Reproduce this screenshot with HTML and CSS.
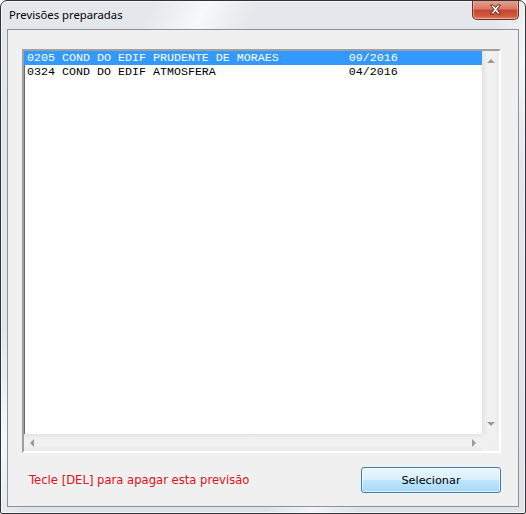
FILE: index.html
```html
<!DOCTYPE html>
<html lang="pt">
<head>
<meta charset="utf-8">
<title>Previsões preparadas</title>
<link rel="stylesheet" href="styles.css">
</head>
<body>
<div class="window">
  <div class="titlebar">
    <span class="title">Previsões preparadas</span>
    <button class="close" aria-label="Fechar">
      <svg width="13" height="11" viewBox="0 0 13 11">
        <path d="M1.5 1 L4.5 1 L6.5 3.6 L8.5 1 L11.5 1 L8 5.5 L11.5 10 L8.5 10 L6.5 7.4 L4.5 10 L1.5 10 L5 5.5 Z" fill="#fff" stroke="#5a2a22" stroke-width="1" stroke-linejoin="round"/>
      </svg>
    </button>
  </div>
  <div class="client">
    <div class="listbox">
      <div class="rows">
        <div class="row selected">0205 COND DO EDIF PRUDENTE DE MORAES          09/2016</div>
        <div class="row">0324 COND DO EDIF ATMOSFERA                   04/2016</div>
      </div>
      <div class="vscroll">
        <span class="arrow up"></span>
        <span class="arrow down"></span>
      </div>
      <div class="hscroll">
        <span class="arrow left"></span>
        <span class="arrow right"></span>
      </div>
      <div class="corner"></div>
    </div>
    <div class="footer">
      <span class="hint">Tecle [DEL] para apagar esta previsão</span>
      <button class="btn">Selecionar</button>
    </div>
  </div>
</div>
</body>
</html>
```

FILE: styles.css
```css
html, body {
  margin: 0;
  padding: 0;
  background: #ffffff;
}

.window {
  box-sizing: border-box;
  width: 526px;
  height: 514px;
  border: 1px solid #2f3337;
  border-radius: 7px 7px 2px 2px;
  padding: 0 6px 6px 6px;
  background:
    linear-gradient(115deg, rgba(255,255,255,0) 20%, rgba(255,255,255,0.7) 27%, rgba(255,255,255,0) 34%, rgba(255,255,255,0) 66%, rgba(255,255,255,0.6) 72%, rgba(255,255,255,0) 78%),
    linear-gradient(to bottom, #e4e8ec, #dfe3e8);
  box-shadow: inset 0 0 0 1px rgba(255,255,255,0.6);
  display: flex;
  flex-direction: column;
  overflow: hidden;
}

.titlebar {
  height: 28px;
  display: flex;
  align-items: flex-start;
}

.title {
  font-family: "Noto Sans", "Open Sans", sans-serif;
  font-size: 11.3px;
  color: #000;
  margin-left: 2px;
  margin-top: 6px;
  line-height: 16px;
}

.close {
  margin-left: auto;
  margin-top: -1px;
  width: 47px;
  height: 20px;
  padding: 0;
  border: 1px solid #6e2f27;
  border-top: none;
  border-radius: 0 0 5px 5px;
  background: linear-gradient(to bottom, #e8a493 0%, #d97a66 45%, #c8452f 55%, #d05a3f 85%, #e3886b 100%);
  box-shadow: inset 0 0 0 1px rgba(255,220,210,0.45);
  display: flex;
  align-items: center;
  justify-content: center;
}

.close svg {
  display: block;
}

.client {
  flex: 1;
  border: 1px solid #8e9296;
  background: #f0f0f0;
  padding: 19px 17px 0 14px;
  display: flex;
  flex-direction: column;
}

.listbox {
  box-sizing: border-box;
  width: 479px;
  height: 404px;
  border-style: solid;
  border-width: 2px;
  border-color: #a0a0a0 #ffffff #ffffff #a0a0a0;
  box-shadow: inset 1px 1px 0 #696969, inset -1px -1px 0 #e3e3e3;
  background: #fff;
  display: grid;
  grid-template-columns: 1fr 17px;
  grid-template-rows: 1fr 17px;
}

.rows {
  overflow: hidden;
}

.row {
  font-family: "Liberation Mono", "Courier New", monospace;
  font-size: 11.67px;
  line-height: 14px;
  height: 14px;
  white-space: pre;
  padding-left: 3px;
  color: #000;
}

.row.selected {
  background: #3399ff;
  color: #fff;
}

.vscroll {
  background: linear-gradient(to right, #e3e3e3, #f1f1f1 30%, #f1f1f1 70%, #e9e9e9);
  display: flex;
  flex-direction: column;
  justify-content: space-between;
  align-items: center;
  padding: 8px 0 8px;
}

.hscroll {
  background: linear-gradient(to bottom, #e3e3e3, #f1f1f1 30%, #f1f1f1 70%, #e9e9e9);
  display: flex;
  justify-content: space-between;
  align-items: center;
  padding: 0 6px 0 6px;
}

.corner {
  background: #f0f0f0;
}

.arrow {
  width: 0;
  height: 0;
  display: block;
}

.arrow.up {
  border-left: 4px solid transparent;
  border-right: 4px solid transparent;
  border-bottom: 4px solid #9a9a9a;
}

.arrow.down {
  border-left: 4px solid transparent;
  border-right: 4px solid transparent;
  border-top: 4px solid #9a9a9a;
}

.arrow.left {
  border-top: 4px solid transparent;
  border-bottom: 4px solid transparent;
  border-right: 4px solid #9a9a9a;
}

.arrow.right {
  border-top: 4px solid transparent;
  border-bottom: 4px solid transparent;
  border-left: 4px solid #9a9a9a;
}

.footer {
  width: 479px;
  margin-top: 14px;
  display: flex;
  align-items: center;
  justify-content: space-between;
}

.hint {
  font-family: "DejaVu Sans", sans-serif;
  font-size: 11.6px;
  color: #e0101a;
  padding-left: 7px;
}

.btn {
  box-sizing: border-box;
  width: 140px;
  height: 26px;
  border: 1px solid #3c7fb1;
  border-radius: 3px;
  background: linear-gradient(to bottom, #eaf6fd 0%, #d9f0fc 48%, #bee6fd 52%, #a7d9f5 100%);
  box-shadow: inset 0 0 0 1px rgba(255,255,255,0.6);
  font-family: "DejaVu Sans", sans-serif;
  font-size: 11.3px;
  color: #000;
  padding: 0;
}
```
